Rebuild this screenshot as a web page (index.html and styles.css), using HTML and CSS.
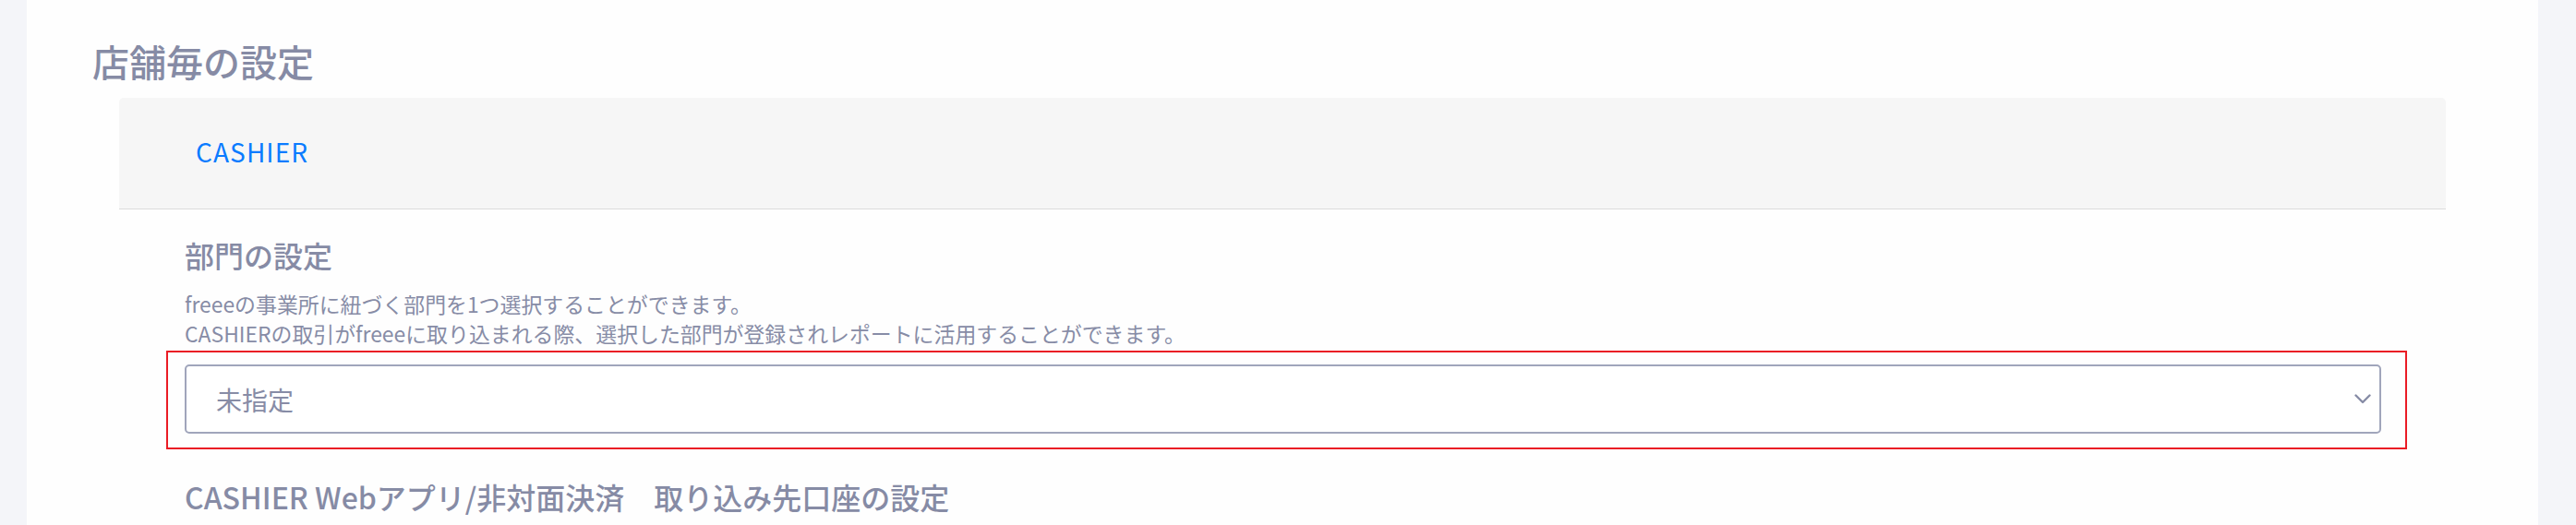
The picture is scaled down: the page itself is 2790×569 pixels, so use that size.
FILE: index.html
```html
<!DOCTYPE html>
<html lang="ja">
<head>
<meta charset="utf-8">
<title>店舗毎の設定</title>
<link rel="stylesheet" href="styles.css">
</head>
<body>
<div class="layout">
  <aside class="side side-left"></aside>
  <main class="main">
    <h2 class="page-title">店舗毎の設定</h2>
    <section class="card">
      <div class="card-header">
        <span class="card-tab">CASHIER</span>
      </div>
      <div class="card-body">
        <h3 class="section-title">部門の設定</h3>
        <p class="desc">freeeの事業所に紐づく部門を1つ選択することができます。<br>CASHIERの取引がfreeeに取り込まれる際、選択した部門が登録されレポートに活用することができます。</p>
        <div class="field highlight">
          <div class="select">
            <span class="select-value">未指定</span>
            <svg class="chevron" width="18" height="11" viewBox="0 0 18 11" aria-hidden="true"><path d="M1.5 1.5 L9 9 L16.5 1.5" fill="none" stroke="#878ca6" stroke-width="2.4" stroke-linecap="round" stroke-linejoin="round"/></svg>
          </div>
        </div>
        <h3 class="section-title second">CASHIER Webアプリ/非対面決済　取り込み先口座の設定</h3>
      </div>
    </section>
  </main>
  <aside class="side side-right"></aside>
</div>
</body>
</html>
```

FILE: styles.css
```css
html, body {
  margin: 0;
  padding: 0;
  background: #ffffff;
}

body {
  font-family: "Noto Sans CJK JP", "Noto Sans", sans-serif;
  color: #878ca6;
}

.layout {
  display: flex;
  height: 569px;
  overflow: hidden;
}

.side {
  background: #f4f5f9;
  flex: none;
}

.side-left {
  width: 29px;
}

.side-right {
  width: 41px;
}

.main {
  flex: 1;
  min-width: 0;
  background: #fefefe;
  padding: 42px 100px 0 71px;
}

.page-title {
  margin: 0;
  font-size: 40px;
  line-height: 48px;
  font-weight: 500;
  color: #868ba5;
}

.card {
  margin: 16px 0 0 29px;
}

.card-header {
  background: #f6f6f6;
  border-radius: 5px 5px 0 0;
  border-bottom: 1px solid #dcdcdc;
  height: 120px;
  box-sizing: content-box;
  padding: 0 0 0 83px;
  display: flex;
  align-items: flex-start;
}

.card-tab {
  margin-top: 38px;
  font-size: 28px;
  line-height: 40px;
  letter-spacing: 1.1px;
  color: #0a7bff;
}

.card-body {
  padding: 29px 70px 0 71px;
}

.section-title {
  margin: 0;
  font-size: 32px;
  line-height: 40px;
  font-weight: 500;
  color: #868ba5;
}

.section-title.second {
  margin-top: 48px;
  white-space: nowrap;
}

.desc {
  margin: 17px 0 0;
  font-size: 22.9px;
  line-height: 32px;
  color: #878ca6;
}

.field {
  margin-top: 18px;
  position: relative;
}

.highlight::after {
  content: "";
  position: absolute;
  top: -15px;
  left: -20px;
  right: -28px;
  bottom: -17px;
  border: 2px solid #ea1c25;
  pointer-events: none;
}

.select {
  box-sizing: border-box;
  height: 75px;
  border: 2px solid #a0a5bb;
  border-radius: 5px;
  background: #ffffff;
  display: flex;
  align-items: center;
  justify-content: space-between;
  padding: 0 9px 0 32px;
}

.select-value {
  font-size: 28px;
  line-height: 40px;
  color: #878ca6;
}

.chevron {
  display: block;
  flex: none;
}
```
